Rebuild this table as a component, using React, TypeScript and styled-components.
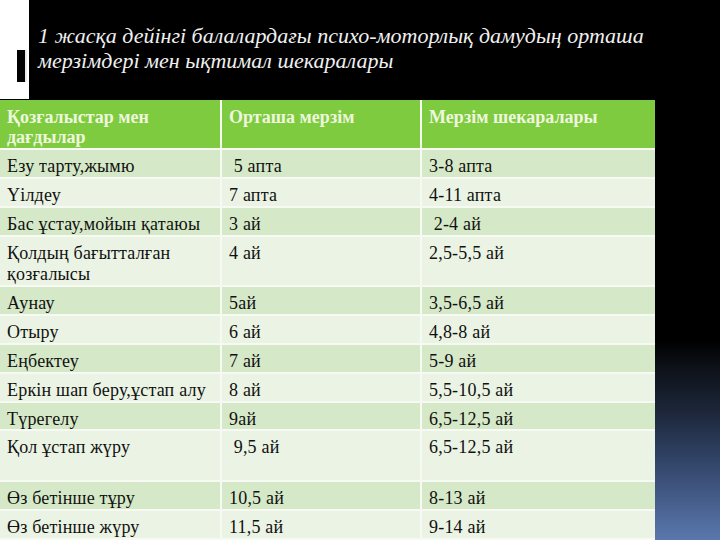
import * as React from 'react';
import styled, { createGlobalStyle } from 'styled-components';

const GlobalStyle = createGlobalStyle`
  html, body {
    margin: 0;
    padding: 0;
    background: #000;
  }
`;

type Shade = 'head' | 'dark' | 'light';

type Row = {
  skill: string;
  mean: string;
  range: string;
  height: number;
  shade: Shade;
};

const rows: Row[] = [
  { skill: 'Езу тарту,жымю', mean: '\u00a05 апта', range: '3-8 апта', height: 29, shade: 'dark' },
  { skill: 'Үілдеу', mean: '7 апта', range: '4-11 апта', height: 29, shade: 'light' },
  { skill: 'Бас ұстау,мойын қатаюы', mean: '3 ай', range: '\u00a02-4 ай', height: 29, shade: 'dark' },
  { skill: 'Қолдың бағытталған қозғалысы', mean: '4 ай', range: '2,5-5,5 ай', height: 50, shade: 'light' },
  { skill: 'Аунау', mean: '5ай', range: '3,5-6,5 ай', height: 29, shade: 'dark' },
  { skill: 'Отыру', mean: '6 ай', range: '4,8-8 ай', height: 29, shade: 'light' },
  { skill: 'Еңбектеу', mean: '7 ай', range: '5-9 ай', height: 29, shade: 'dark' },
  { skill: 'Еркін шап беру,ұстап алу', mean: '8 ай', range: '5,5-10,5 ай', height: 29, shade: 'light' },
  { skill: 'Түрегелу', mean: '9ай', range: '6,5-12,5 ай', height: 28, shade: 'dark' },
  { skill: 'Қол ұстап жүру', mean: '\u00a09,5 ай', range: '6,5-12,5 ай', height: 51, shade: 'light' },
  { skill: 'Өз бетінше тұру', mean: '10,5 ай', range: '8-13 ай', height: 29, shade: 'dark' },
  { skill: 'Өз бетінше жүру', mean: '11,5 ай', range: '9-14 ай', height: 29, shade: 'light' },
];

const Page = styled.div`
  width: 720px;
  height: 540px;
  overflow: hidden;
  background: linear-gradient(
    to bottom,
    #000 0%,
    #000 63%,
    #0d1118 68%,
    #1c2638 76%,
    #33466b 86%,
    #5a77ad 100%
  );
`;

const TitleBar = styled.div`
  display: flex;
  height: 99px;
  background: #000;
`;

const Strip = styled.div`
  width: 29px;
  flex: none;
  background: #fff;
  padding: 50px 0 0 17px;
  box-sizing: border-box;
`;

const Marker = styled.div`
  width: 10px;
  height: 32px;
  background: #000;
  border-right: 2px solid #e8e8e8;
  box-sizing: border-box;
`;

const Title = styled.h1`
  margin: 0;
  padding: 23px 0 0 9px;
  font-family: 'Liberation Serif', 'DejaVu Serif', serif;
  font-style: italic;
  font-weight: normal;
  font-size: 22px;
  line-height: 25px;
  color: #f0f0f0;
`;

const Table = styled.div`
  width: 655px;
  margin-top: 1px;
  display: grid;
  grid-template-columns: 222px 200px 233px;
  font-family: 'Liberation Serif', 'Times New Roman', serif;
`;

const Cell = styled.div<{ $shade: Shade; $h: number; $last?: boolean }>`
  height: ${(p) => p.$h}px;
  box-sizing: border-box;
  padding: ${(p) => (p.$shade === 'head' ? 7 : 6)}px 4px 0 7px;
  border-bottom: 2px solid #f6faf2;
  border-right: ${(p) => (p.$last ? 'none' : '2px solid #f6faf2')};
  background: ${(p) =>
    p.$shade === 'head' ? '#7ecb3f' : p.$shade === 'dark' ? '#d5e9c8' : '#ebf4e4'};
  color: ${(p) => (p.$shade === 'head' ? '#eef7de' : '#111')};
  font-size: 18px;
  line-height: ${(p) => (p.$shade === 'head' ? 20 : 21)}px;
  letter-spacing: ${(p) => (p.$shade === 'head' ? 0 : 0.2)}px;
  font-weight: ${(p) => (p.$shade === 'head' ? 'bold' : 'normal')};
  overflow: hidden;
`;

export default function App() {
  return (
    <Page>
      <GlobalStyle />
      <TitleBar>
        <Strip>
          <Marker />
        </Strip>
        <Title>
          1 жасқа дейінгі балалардағы психо-моторлық дамудың орташа
          <br />
          мерзімдері мен ықтимал шекаралары
        </Title>
      </TitleBar>
      <Table>
        <Cell $shade="head" $h={50}>
          Қозғалыстар мен дағдылар
        </Cell>
        <Cell $shade="head" $h={50}>
          Орташа мерзім
        </Cell>
        <Cell $shade="head" $h={50} $last>
          Мерзім шекаралары
        </Cell>
        {rows.map((r) => (
          <React.Fragment key={r.skill}>
            <Cell $shade={r.shade} $h={r.height}>
              {r.skill}
            </Cell>
            <Cell $shade={r.shade} $h={r.height}>
              {r.mean}
            </Cell>
            <Cell $shade={r.shade} $h={r.height} $last>
              {r.range}
            </Cell>
          </React.Fragment>
        ))}
      </Table>
    </Page>
  );
}
